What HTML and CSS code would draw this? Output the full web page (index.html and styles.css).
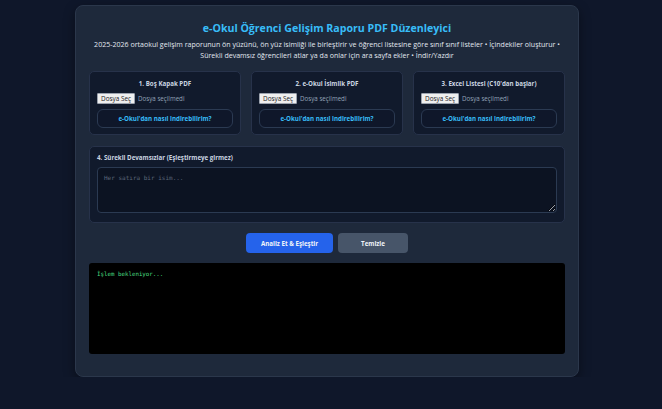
FILE: index.html
```html
<!DOCTYPE html>
<html lang="tr">

<head>
    <meta charset="UTF-8">
    <meta name="viewport" content="width=device-width, initial-scale=1.0">
    <title>e-Okul Gelişim Raporu PDF Düzenleyici</title>
    <link rel="stylesheet" href="styles.css">
</head>

<body>
    <div class="kutu">
        <h1>e-Okul Öğrenci Gelişim Raporu PDF Düzenleyici</h1>
        <p class="aciklama">2025-2026 ortaokul gelişim raporunun ön yüzünü, ön yüz isimliği ile birleştirir ve öğrenci listesine göre sınıf sınıf listeler • İçindekiler oluşturur • Sürekli devamsız öğrencileri atlar ya da onlar için ara sayfa ekler • İndir/Yazdır</p>

        <div class="kartlar">
            <div class="kart">
                <div class="kart-baslik">1. Boş Kapak PDF</div>
                <div class="dosya">
                    <span class="dosya-btn">Dosya Seç</span>
                    <span class="dosya-ad">Dosya seçilmedi</span>
                </div>
                <a class="yardim">e-Okul'dan nasıl indirebilirim?</a>
            </div>
            <div class="kart">
                <div class="kart-baslik">2. e-Okul İsimlik PDF</div>
                <div class="dosya">
                    <span class="dosya-btn">Dosya Seç</span>
                    <span class="dosya-ad">Dosya seçilmedi</span>
                </div>
                <a class="yardim">e-Okul'dan nasıl indirebilirim?</a>
            </div>
            <div class="kart">
                <div class="kart-baslik">3. Excel Listesi (C10'dan başlar)</div>
                <div class="dosya">
                    <span class="dosya-btn">Dosya Seç</span>
                    <span class="dosya-ad">Dosya seçilmedi</span>
                </div>
                <a class="yardim">e-Okul'dan nasıl indirebilirim?</a>
            </div>
        </div>

        <div class="kart devamsiz">
            <div class="kart-baslik sol">4. Sürekli Devamsızlar (Eşleştirmeye girmez)</div>
            <textarea id="devamsizlar" placeholder="Her satıra bir isim..."></textarea>
        </div>

        <div class="butonlar">
            <button class="btn mavi">Analiz Et &amp; Eşleştir</button>
            <button class="btn gri">Temizle</button>
        </div>

        <div class="log">İşlem bekleniyor...</div>
    </div>
</body>

</html>
```

FILE: styles.css
```css
body {
    font-family: "Open Sans", "Noto Sans", sans-serif;
    background-color: #0f172a;
    margin: 0;
    padding: 5px 0 0 75px;
}

.kutu {
    box-sizing: border-box;
    width: 504px;
    background-color: #1e293b;
    border: 1px solid #2b374b;
    border-radius: 8px;
    padding: 15px 13px 22px;
    box-shadow: 0 4px 12px rgba(0, 0, 0, 0.4);
}

h1 {
    margin: 0;
    text-align: center;
    color: #38bdf8;
    font-size: 10.6px;
    line-height: 15px;
    font-weight: 700;
}

.aciklama {
    margin: 3px 0 0;
    text-align: center;
    color: #e2e8f0;
    font-size: 7.05px;
    line-height: 11px;
}

.kartlar {
    display: grid;
    grid-template-columns: 1fr 1fr 1fr;
    gap: 10px;
    margin-top: 10px;
}

.kart {
    background-color: #111a2c;
    border: 1px solid #27324a;
    border-radius: 5px;
    padding: 7px 7px 6px;
}

.kart-baslik {
    text-align: center;
    color: #cbd5e1;
    font-size: 6.2px;
    font-weight: 700;
    line-height: 10px;
}

.kart-baslik.sol {
    text-align: left;
}

.dosya {
    display: flex;
    align-items: center;
    gap: 3px;
    margin-top: 4px;
    height: 11px;
}

.dosya-btn {
    background-color: #efefef;
    border: 1px solid #9ca3af;
    color: #222;
    font-size: 6.4px;
    line-height: 9px;
    padding: 0 3px;
    border-radius: 1px;
}

.dosya-ad {
    color: #94a3b8;
    font-size: 6.2px;
}

.yardim {
    display: block;
    margin-top: 5px;
    height: 19px;
    line-height: 17px;
    box-sizing: border-box;
    border: 1px solid #2b3a52;
    border-radius: 6px;
    background-color: #0f172a;
    color: #38bdf8;
    text-align: center;
    font-size: 6.2px;
    font-weight: 700;
}

.devamsiz {
    margin-top: 11px;
    padding: 6px 7px 9px;
}

textarea {
    display: block;
    box-sizing: border-box;
    width: 100%;
    height: 46px;
    margin-top: 4px;
    background-color: #0c1322;
    border: 1px solid #2b3a52;
    border-radius: 4px;
    color: #cbd5e1;
    font-family: "DejaVu Sans Mono", monospace;
    font-size: 6px;
    padding: 6px;
    resize: vertical;
}

textarea::placeholder {
    color: #5b6678;
}

.butonlar {
    display: flex;
    justify-content: center;
    gap: 5px;
    margin-top: 10px;
}

.btn {
    height: 20px;
    border: none;
    border-radius: 4px;
    font-family: "Open Sans", "Noto Sans", sans-serif;
    font-size: 6.2px;
    font-weight: 700;
    color: #f1f5f9;
    padding: 0;
}

.mavi {
    width: 87px;
    background-color: #2563eb;
}

.gri {
    width: 70px;
    background-color: #475569;
}

.log {
    margin-top: 10px;
    height: 91px;
    box-sizing: border-box;
    background-color: #000;
    border-radius: 3px;
    padding: 7px 8px;
    color: #4ade80;
    font-family: "DejaVu Sans Mono", monospace;
    font-size: 5.8px;
    line-height: 8px;
}
```
